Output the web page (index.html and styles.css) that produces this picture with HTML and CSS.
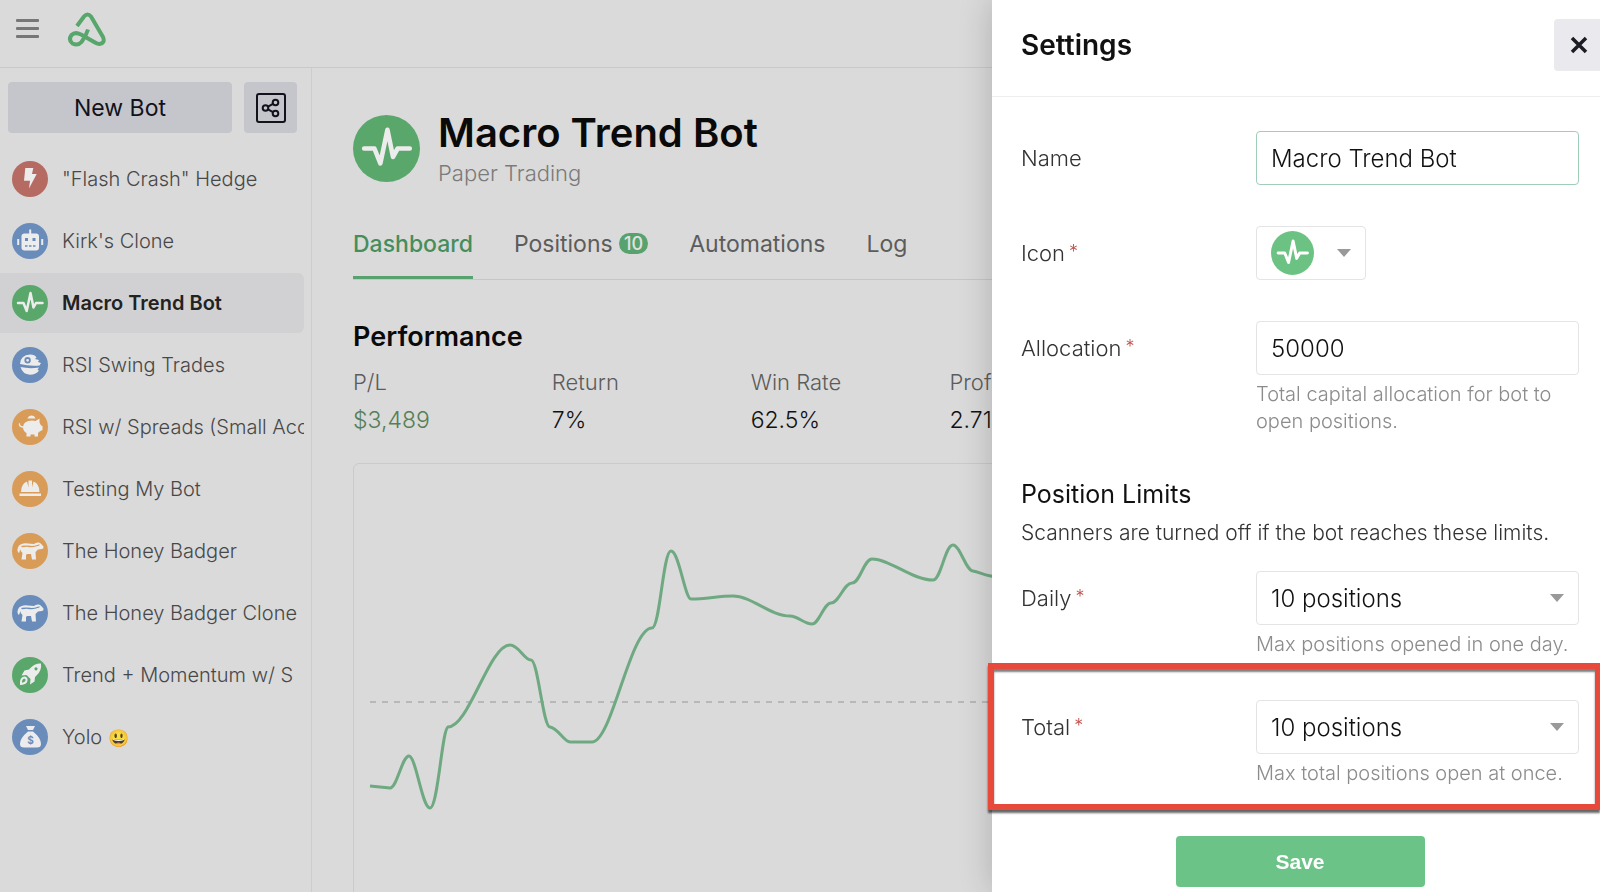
FILE: index.html
```
<!DOCTYPE html>
<html lang="en">
  <head>
    <meta charset="UTF-8" />
    <meta name="viewport" content="width=device-width, initial-scale=1.0" />
    <title>Macro Trend Bot</title>
    <link rel="stylesheet" href="styles.css">
  </head>
  <body>
    <!-- Shared shapes -->
    <svg class="sprite" aria-hidden="true">
      <symbol id="pulse" viewBox="0 0 36 36">
        <path d="M6 18h5.500l3.200 8L18.500 8l3 14.500L24 18h6.500" fill="none" stroke="currentColor" stroke-width="2.500" stroke-linecap="round" stroke-linejoin="round" />
      </symbol>
      <symbol id="badger" viewBox="0 0 36 36">
        <path d="M6 14.500q.500-2.500 3-3.200Q12 10 16 10.500l6 .500q2-2 5-1.500l2 1.200 2.500 2.800q.500 2-1.500 2.500l-4 .500-2.500 2.500.500 7.500h-4l-1-5.500h-4L14 22v4.500H9.500l1-6.500Q8 18 8.500 16L7 20q-2.500-2-1-5.500z" fill="currentColor" />
        <path d="M10 13.500q5-.700 8 0t9-1.500" fill="none" stroke="var(--tone)" stroke-width="1.300" stroke-linecap="round" />
      </symbol>
    </svg>

    <div class="app">
      <header class="topbar">
        <button class="menu-btn" aria-label="Menu"><span></span><span></span><span></span></button>
        <a href="#" class="logo" aria-label="Home">
          <svg viewBox="0 0 40 36">
            <path d="M10 15l7-9.500q3.500-4 7 0L36 26q2.500 6-3.500 7-2 0-4-1.200L14 23.500Q8 20.500 4.500 24 1 29 5.500 32.500 11 35 14.500 31 19 25 21 18.500" fill="none" stroke="#58a66c" stroke-width="4" stroke-linejoin="round" />
          </svg>
        </a>
      </header>

      <div class="layout">
        <aside class="sidebar">
          <div class="sidebar-actions">
            <button class="new-bot">New Bot</button>
            <button class="share-btn" aria-label="Share">
              <svg viewBox="0 0 32 32" fill="none" stroke="#11121c" stroke-width="2">
                <rect x="2" y="2" width="28" height="28" rx="2" />
                <circle cx="10.500" cy="16" r="2.800" />
                <circle cx="20.500" cy="10.500" r="2.800" />
                <circle cx="20.500" cy="21.500" r="2.800" />
                <path d="M13 14.700l5-2.800M13 17.300l5 2.800" />
              </svg>
            </button>
          </div>

          <nav class="bot-list">
            <a href="#" class="bot">
              <svg class="bot-icon red" viewBox="0 0 36 36"><path d="M13.300 7h8L20 13h4.700L17 27.500l1-7.800h-6z" fill="currentColor" /></svg>
              <span>"Flash Crash" Hedge</span>
            </a>
            <a href="#" class="bot">
              <svg class="bot-icon blue" viewBox="0 0 36 36">
                <rect x="9.500" y="10.500" width="17.500" height="17" rx="3" fill="currentColor" />
                <path d="M18.200 6.500v5M6.200 16v6M30.200 16v6" stroke="currentColor" stroke-width="2" />
                <path d="M13 16.500h3M20.500 16.500h3" stroke="var(--tone)" stroke-width="3" />
                <path d="M13 23h10.500" stroke="var(--tone)" stroke-width="1.500" stroke-dasharray="2.500 1.500" />
              </svg>
              <span>Kirk's Clone</span>
            </a>
            <a href="#" class="bot active">
              <svg class="bot-icon green" viewBox="0 0 36 36"><use href="#pulse" /></svg>
              <span>Macro Trend Bot</span>
            </a>
            <a href="#" class="bot">
              <svg class="bot-icon blue" viewBox="0 0 36 36">
                <path d="M8 17Q8.500 8 18 7.500q5 0 6.500 3l-1.500 1.500 4 1-1 2 3 1-1.500 2.500Q18 19.500 8 17z" fill="currentColor" />
                <path d="M8.500 20q9 2 18.500.500l-1.500 2.200 1.500 1q-3.500 4-9 4-7.500-.500-9.500-7.700z" fill="currentColor" />
                <circle cx="15.600" cy="13.300" r="2.300" fill="none" stroke="var(--tone)" stroke-width="1.800" />
              </svg>
              <span>RSI Swing Trades</span>
            </a>
            <a href="#" class="bot">
              <svg class="bot-icon orange" viewBox="0 0 36 36">
                <path d="M15.500 9.500q1-3 4-3t4 3zM11 18q.500-6.500 9-6.500 2 0 3.500.500l4-2.500v4l1.500 3 1.500.500V21l-2.500 1.200-2 1.800v3.500h-3.500v-2h-4v2h-4V24Q11 22 11 18z" fill="currentColor" />
                <path d="M11 18q-4-.500-3.500-3" fill="none" stroke="currentColor" stroke-width="1.400" stroke-linecap="round" />
              </svg>
              <span>RSI w/ Spreads (Small Acc</span>
            </a>
            <a href="#" class="bot">
              <svg class="bot-icon orange" viewBox="0 0 36 36">
                <path d="M9 21q0-8 6-10.500l1.500 6V9.500h3.500v7l1.500-6Q27.500 13 27.500 21zM7.500 22.500H29v2.500H7.500z" fill="currentColor" />
              </svg>
              <span>Testing My Bot</span>
            </a>
            <a href="#" class="bot">
              <svg class="bot-icon orange" viewBox="0 0 36 36"><use href="#badger" /></svg>
              <span>The Honey Badger</span>
            </a>
            <a href="#" class="bot">
              <svg class="bot-icon blue" viewBox="0 0 36 36"><use href="#badger" /></svg>
              <span>The Honey Badger Clone</span>
            </a>
            <a href="#" class="bot">
              <svg class="bot-icon green" viewBox="0 0 36 36">
                <path d="M29 6.500q1 7-4.500 12l-1.500 1.500-.500 4.500-4.500 3 .500-5.500-4-4-5 .500 3-5 4.500-1 2-2q4.500-4.500 10-4z" fill="currentColor" />
                <path d="M9 27q-.500-6 3.500-6.500 2.500.500 2 3Q14 26.500 9 27z" fill="none" stroke="currentColor" stroke-width="2" />
                <circle cx="24" cy="11.800" r="1.600" fill="var(--tone)" />
              </svg>
              <span>Trend + Momentum w/ S</span>
            </a>
            <a href="#" class="bot">
              <svg class="bot-icon blue" viewBox="0 0 36 36">
                <path d="M14 7h9l-2 4h-5zM16 12.500h5q8 6.500 8 12.500 0 3.500-4 3.500H12q-4 0-4-3.500 0-6 8-12.500z" fill="currentColor" />
                <text x="18.500" y="25" text-anchor="middle">$</text>
              </svg>
              <span>Yolo <span class="emoji">😃</span></span>
            </a>
          </nav>
        </aside>

        <main class="content">
          <div class="bot-header">
            <svg class="bot-avatar green" viewBox="0 0 36 36"><use href="#pulse" /></svg>
            <div>
              <h1>Macro Trend Bot</h1>
              <p>Paper Trading</p>
            </div>
          </div>

          <nav class="tabs">
            <a href="#" class="active">Dashboard</a>
            <a href="#">Positions <span class="badge">10</span></a>
            <a href="#">Automations</a>
            <a href="#">Log</a>
          </nav>

          <h2>Performance</h2>
          <dl class="stats">
            <div><dt>P/L</dt><dd class="gain">$3,489</dd></div>
            <div><dt>Return</dt><dd>7%</dd></div>
            <div><dt>Win Rate</dt><dd>62.5%</dd></div>
            <div><dt>Prof</dt><dd>2.71</dd></div>
          </dl>

          <div class="chart">
            <svg width="1190" height="470" fill="none">
              <path d="M16 238H1176" stroke="#adadad" stroke-dasharray="6 6" stroke-width="1.500" />
              <path
                d="M16 322L36 324C43 324 48 292 55 292C62 292 68 344 76 344C84 344 88 265 94 263
                  C115 263 135 181 156 181C165 181 170 196 177 196C184 196 189 263 196 263
                  C204 264 210 278 216 278L238 278C258 278 276 164 298 164C306 164 309 87 317 87
                  C325 87 331 135 337 135C352 135 365 132 379 132C398 132 416 152 436 152
                  C444 152 450 160 458 160C465 160 470 139 477 139C485 139 490 119 498 119
                  C506 119 510 95 518 95C536 95 558 116 579 116C587 116 591 81 599 81
                  C606 81 612 107 619 107C626 108 632 113 646 113"
                stroke="#6fa982" stroke-width="3" />
            </svg>
          </div>
        </main>
      </div>
    </div>

    <!-- Settings panel -->
    <section class="settings">
      <header class="settings-header">
        <h2>Settings</h2>
        <button class="close-btn" aria-label="Close">
          <svg viewBox="0 0 20 20"><path d="M3 3l14 14M17 3L3 17" stroke="#1c1d24" stroke-width="3.500" /></svg>
        </button>
      </header>

      <form class="settings-form">
        <div class="field">
          <label for="name">Name</label>
          <input type="text" id="name" class="focused" value="Macro Trend Bot" />
        </div>
        <div class="field">
          <label for="icon">Icon<sup>*</sup></label>
          <button type="button" id="icon" class="icon-picker">
            <svg class="picker-icon" viewBox="0 0 36 36"><use href="#pulse" /></svg>
            <i class="caret"></i>
          </button>
        </div>
        <div class="field">
          <label for="allocation">Allocation<sup>*</sup></label>
          <div>
            <input type="text" id="allocation" value="50000" />
            <p class="help">Total capital allocation for bot to open positions.</p>
          </div>
        </div>

        <div class="limits">
          <h3>Position Limits</h3>
          <p>Scanners are turned off if the bot reaches these limits.</p>
        </div>

        <div class="field">
          <label for="daily">Daily<sup>*</sup></label>
          <div>
            <div class="select">
              <select id="daily"><option>10 positions</option></select>
              <i class="caret"></i>
            </div>
            <p class="help">Max positions opened in one day.</p>
          </div>
        </div>
        <div class="highlight">
          <div class="field">
            <label for="total">Total<sup>*</sup></label>
            <div>
              <div class="select">
                <select id="total"><option>10 positions</option></select>
                <i class="caret"></i>
              </div>
              <p class="help">Max total positions open at once.</p>
            </div>
          </div>
        </div>

        <button type="submit" class="save-btn">Save</button>
      </form>
    </section>
  </body>
</html>
```
FILE: styles.css
```
/* Reset & Base Styles */
* {
  margin: 0;
  padding: 0;
  box-sizing: border-box;
}

body {
  background-color: #dadada;
  color: #111;
  font-family: Inter, "Open Sans", sans-serif;
  font-size: 21px;
  font-weight: 300;
}

button,
input,
select {
  font: inherit;
  color: inherit;
}

button {
  border: none;
  cursor: pointer;
}

a {
  color: inherit;
  text-decoration: none;
}

.sprite {
  position: absolute;
  width: 0;
  height: 0;
}

.app {
  display: flex;
  flex-direction: column;
  height: 100vh;
  overflow: hidden;
}

.red { --tone: #b56a62; }
.blue { --tone: #6a8cba; }
.green { --tone: #5aa76b; }
.orange { --tone: #d99c58; }

/* Top bar */
.topbar {
  flex: none;
  display: flex;
  align-items: center;
  gap: 28px;
  height: 68px;
  padding: 0 16px 10px;
  border-bottom: 1px solid #c9c9c9;
}

.menu-btn {
  display: flex;
  flex-direction: column;
  gap: 5px;
  width: 23px;
  background: none;
}

.menu-btn span {
  height: 3px;
  border-radius: 1px;
  background-color: #777;
}

.logo svg {
  display: block;
  width: 40px;
  height: 36px;
}

.layout {
  flex: 1;
  display: flex;
  min-height: 0;
}

/* Sidebar */
.sidebar {
  flex: none;
  width: 312px;
  padding: 14px 7px 0 0;
  border-right: 1px solid #cdcdcd;
}

.sidebar-actions {
  display: flex;
  gap: 12px;
  padding: 0 7px 0 8px;
  margin-bottom: 16px;
}

.new-bot,
.share-btn {
  height: 51px;
  border-radius: 4px;
  background-color: #c5c6cc;
  color: #11121c;
}

.new-bot {
  flex: 1;
  font-size: 23px;
  font-weight: 400;
}

.share-btn {
  display: grid;
  place-items: center;
  width: 53px;
}

.share-btn svg {
  width: 32px;
  height: 32px;
}

.bot-list {
  display: flex;
  flex-direction: column;
  gap: 2px;
}

.bot {
  display: flex;
  align-items: center;
  gap: 14px;
  height: 60px;
  padding-left: 12px;
  border-radius: 0 6px 6px 0;
  color: #484848;
  font-size: 20px;
  overflow: hidden;
  white-space: nowrap;
}

.bot.active {
  background-color: #d1d1d3;
  color: #222;
  font-weight: 600;
}

.bot-icon,
.bot-avatar {
  flex: none;
  border-radius: 50%;
  background-color: var(--tone);
  color: #ececec;
}

.bot-icon {
  width: 36px;
  height: 36px;
}

.bot-icon text {
  fill: var(--tone);
  font-size: 10px;
  font-weight: 700;
}

.emoji {
  font-size: 17px;
  opacity: 0.9;
}

/* Dashboard */
.content {
  flex: 1;
  min-width: 0;
  padding: 40px 54px 0 41px;
}

.bot-header {
  display: flex;
  align-items: center;
  gap: 18px;
  height: 80px;
}

.bot-avatar {
  width: 67px;
  height: 67px;
}

.bot-header h1 {
  color: #0a0a0a;
  font-size: 40px;
  font-weight: 600;
  line-height: 50px;
}

.bot-header p {
  color: #7b7b7b;
  font-size: 22px;
  line-height: 30px;
}

.tabs {
  display: flex;
  gap: 41px;
  height: 92px;
  border-bottom: 1px solid #c6c6c6;
  color: #5c5c5c;
  font-size: 23px;
  font-weight: 400;
}

.tabs a {
  padding-top: 42px;
  line-height: 28px;
}

.tabs .active {
  border-bottom: 3px solid #57a26e;
  color: #458e5c;
  font-weight: 500;
}

.badge {
  display: inline-block;
  padding: 0 5px;
  border-radius: 11px;
  background-color: #57a26e;
  color: #e2e2e2;
  font-size: 18px;
  font-weight: 500;
  line-height: 21px;
  vertical-align: 2px;
}

.content h2 {
  margin-top: 41px;
  color: #0a0a0a;
  font-size: 27px;
  font-weight: 600;
  line-height: 32px;
}

.stats {
  display: grid;
  grid-template-columns: repeat(6, 1fr);
  margin: 12px 0 22px;
}

.stats dt {
  color: #5c5c5c;
  font-size: 22px;
  line-height: 34px;
  white-space: nowrap;
}

.stats dd {
  color: #111;
  font-size: 23px;
  line-height: 42px;
}

.stats .gain {
  color: #557f55;
}

.chart {
  border: 1px solid #cacaca;
  border-radius: 6px;
  overflow: hidden;
}

.chart svg {
  display: block;
}

/* Settings panel */
.settings {
  position: fixed;
  top: 0;
  right: 0;
  bottom: 0;
  width: 38%;
  background-color: #fff;
  box-shadow: 0 0 32px rgba(0, 0, 0, 0.2);
}

.settings-header {
  display: flex;
  align-items: center;
  justify-content: space-between;
  height: 97px;
  padding: 0 0 7px 29px;
  border-bottom: 1px solid #eee;
}

.settings-header h2 {
  font-size: 28px;
  font-weight: 600;
}

.close-btn {
  display: grid;
  place-items: center;
  width: 46px;
  height: 52px;
  padding-left: 4px;
  border-radius: 4px 0 0 4px;
  background-color: #e9e9ee;
}

.close-btn svg {
  width: 20px;
  height: 20px;
}

.settings-form {
  display: flex;
  flex-direction: column;
  padding: 34px 21px 0 29px;
}

.field {
  display: grid;
  grid-template-columns: 235px 1fr;
  margin-bottom: 41px;
}

.field label {
  color: #333;
  font-size: 22px;
  line-height: 54px;
}

.field sup {
  margin-left: 4px;
  color: #c0504a;
  font-size: 18px;
  line-height: 1;
  vertical-align: 3px;
}

.field input,
.field select,
.icon-picker {
  width: 100%;
  height: 54px;
  padding: 0 14px;
  border: 1px solid #e4e4e4;
  border-radius: 4px;
  background-color: #fff;
  font-size: 24px;
  appearance: none;
}

.field input.focused {
  border-color: #9fcdb8;
}

.field .icon-picker {
  display: flex;
  align-items: center;
  gap: 23px;
  width: 110px;
}

.picker-icon {
  width: 44px;
  height: 44px;
  border-radius: 50%;
  background-color: #6cc283;
  color: #fff;
}

.select {
  display: flex;
  align-items: center;
}

.caret {
  border: 7px solid transparent;
  border-top: 8px solid #999;
  border-bottom: none;
}

.select .caret {
  margin-left: -29px;
  margin-right: 15px;
  pointer-events: none;
}

.help {
  margin-top: 6px;
  color: #8c8c8c;
  font-size: 20px;
  line-height: 27px;
}

.limits {
  margin: 3px 0 25px;
}

.limits h3 {
  margin-bottom: 10px;
  font-size: 25px;
  font-weight: 400;
  line-height: 30px;
}

.limits p {
  color: #333;
  line-height: 27px;
}

.highlight {
  margin: -36px -21px 26px -33px;
  padding: 31px 16px 17px 27px;
  border: 6px solid #e74a3b;
  border-right-width: 5px;
  box-shadow: 0 3px 2px rgba(0, 0, 0, 0.6), inset 0 3px 2px rgba(0, 0, 0, 0.5);
}

.highlight .field {
  margin-bottom: 0;
}

.save-btn {
  align-self: center;
  width: 249px;
  height: 51px;
  border-radius: 4px;
  background-color: #6cc387;
  color: #fff;
  font-family: "Liberation Sans", Arial, sans-serif;
  font-size: 21px;
  font-weight: 700;
}
```
